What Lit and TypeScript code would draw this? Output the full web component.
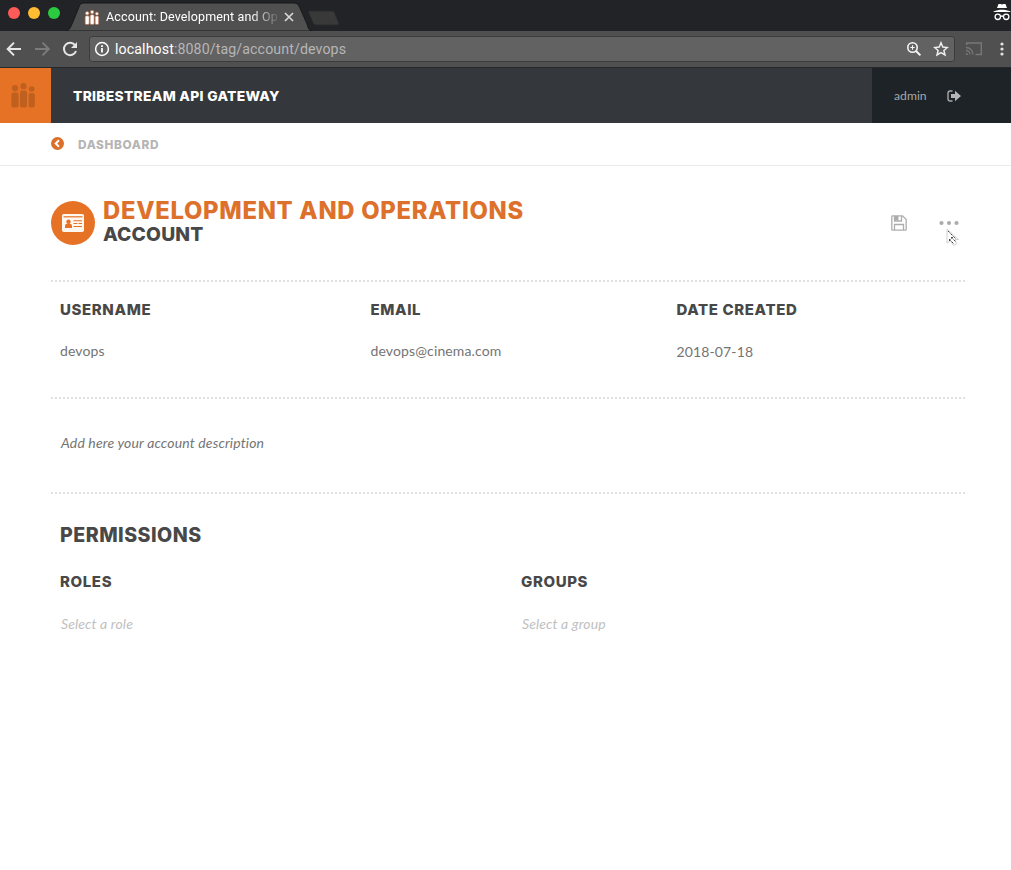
import { LitElement, html, css, svg } from "lit";
import { customElement } from "lit/decorators.js";

const people = svg`
  <circle cx="4" cy="5.2" r="3.1"/><circle cx="12.5" cy="3.2" r="3.1"/><circle cx="20.7" cy="6" r="2.8"/>
  <rect x="0.4" y="9.5" width="7.2" height="15" rx="2.2"/>
  <rect x="9" y="7.6" width="7" height="16.9" rx="2.2"/>
  <rect x="17.6" y="10" width="6.2" height="14.5" rx="2.2"/>`;

@customElement("browser-chrome")
class BrowserChrome extends LitElement {
  static styles = css`
    :host { display: block; font-family: Roboto, "Liberation Sans", sans-serif; }
    .tabs { height: 31px; background: #212326; display: flex; position: relative; box-sizing: border-box; }
    .lights { display: flex; gap: 8px; padding: 7px 0 0 8px; width: 60px; }
    .light { width: 12px; height: 12px; border-radius: 50%; }
    .red { background: #fc5b57; }
    .yellow { background: #fdbc31; }
    .green { background: #2bca41; }
    .shape { position: absolute; left: 66px; top: 0; }
    .tab { position: relative; display: flex; align-items: center; height: 28px; margin-top: 3px; padding-left: 16px; }
    .favicon { margin-right: 6px; }
    .title { width: 173px; font-size: 12.5px; letter-spacing: 0.14px; line-height: 16px; padding-bottom: 1px; white-space: nowrap; color: #fff;
      -webkit-mask-image: linear-gradient(90deg, #000 145px, transparent 175px); }
    .close { margin-left: 5px; }
    .spy { position: absolute; right: 0; top: 3px; }
    .toolbar { height: 37px; box-sizing: border-box; background: #505050; border-bottom: 1px solid #26292b; display: flex; align-items: center; padding: 0 5px; }
    .nav { width: 84px; height: 20px; flex: none; }
    .omnibox { flex: none; width: 866px; height: 26px; box-sizing: border-box; background: #626262; border: 1px solid #3c3c3c; border-radius: 3px; display: flex; align-items: center; padding: 0 5px 0 4px; }
    .url { flex: 1; margin-left: 5px; font-size: 14.2px; letter-spacing: 0.1px; color: #b6b6b6; white-space: nowrap; }
    .host { color: #fff; }
    .star { margin-left: 11px; }
    .cast { margin-left: 10px; }
    .menu { margin-left: 15px; }
    svg { display: block; flex: none; }
  `;
  render() {
    return html`
      <div class="tabs">
        <svg class="shape" width="280" height="31" viewBox="0 0 280 31">
          <path d="M0 31C4 30 4.500 27 6 24L13 7C14 4 15 3 18 3H228C231 3 232 4 233.500 7L241 24C242 28 243 30.500 246 31Z" fill="#505050" stroke="#17181a" stroke-width="1"/>
          <path d="M243 11H266C267.500 11 268 11.500 268.500 12.500L273 24C273 25 272.500 25 271.500 25H250C248 25 247.500 24 247 23L242.500 12.500Z" fill="#393939" stroke="#292a2b" stroke-width="1"/>
        </svg>
        <div class="lights"><i class="light red"></i><i class="light yellow"></i><i class="light green"></i></div>
        <div class="tab">
          <svg class="favicon" width="16" height="17" viewBox="-1.500 -1 27.500 27" fill="#fff" stroke="#b6653f" stroke-width="1.200">${people}</svg>
          <div class="title">Account: Development and Op</div>
          <svg class="close" width="10" height="10" viewBox="0 0 10 10"><path d="M1 1l8 8M9 1L1 9" stroke="#d8d8d8" stroke-width="1.700"/></svg>
        </div>
        <svg class="spy" width="18" height="19" viewBox="0 0 18 19">
          <path d="M5.500 1H7.500L9 1.500L10.500 1H12.500L14 5H4Z" fill="#fff"/>
          <path d="M0.500 8.500C6 6.200 12 6.200 17.500 8.500V9H.5Z" fill="#fff"/>
          <g fill="none" stroke="#fff" stroke-width="1.300"><circle cx="4.800" cy="13.800" r="2.700"/><circle cx="13.200" cy="13.800" r="2.700"/><path d="M7.500 13.500Q9 12.500 10.500 13.500"/></g>
        </svg>
      </div>
      <div class="toolbar">
        <svg class="nav" viewBox="0 0 84 20" fill="none" stroke-width="2">
          <path d="M16 10H3.500M9 3.600L2.700 10L9 16.400" stroke="#e6e6e6"/>
          <path d="M30 10H43M37.500 3.600L43.800 10L37.500 16.400" stroke="#7b7b7b"/>
          <path d="M70.300 6.500A6.200 6.200 0 1 0 71 12" stroke="#e6e6e6"/>
          <path d="M72 3V9H66Z" fill="#e6e6e6"/>
        </svg>
        <div class="omnibox">
          <svg width="16" height="16" viewBox="0 0 16 16"><circle cx="8" cy="8" r="6.400" fill="none" stroke="#fff" stroke-width="1.500"/><path d="M7.100 7H8.900V11.500H7.100ZM7.100 4.300H8.900V6H7.100Z" fill="#fff"/></svg>
          <div class="url"><span class="host">localhost</span>:8080/tag/account/devops</div>
          <svg width="16" height="16" viewBox="0 0 16 16" fill="none" stroke="#f5f5f5"><circle cx="6.500" cy="6.500" r="4.700" stroke-width="1.600"/><path d="M10 10L14.400 14.400" stroke-width="2"/><path d="M4.300 6.500H8.700M6.500 4.300V8.700" stroke-width="1.100"/></svg>
          <svg class="star" width="16" height="16" viewBox="0 0 16 16"><path d="M8 1.800L9.800 6.100L14.400 6.500L10.900 9.500L12 14L8 11.600L4 14L5.100 9.500L1.600 6.500L6.200 6.100Z" fill="none" stroke="#eee" stroke-width="1.500"/></svg>
        </div>
        <svg class="cast" width="18" height="16" viewBox="0 0 18 16" fill="none" stroke="#77767a" stroke-width="1.400"><path d="M1.700 4V2H16.300V13.500H10.500M1 6.500A7 7 0 0 1 8 13.500M1 9.500A4 4 0 0 1 5 13.500"/><path d="M1 12V14H3A2 2 0 0 0 1 12Z" fill="#77767a" stroke="none"/></svg>
        <svg class="menu" width="8" height="16" viewBox="0 0 8 16" fill="#e4e4e4"><circle cx="4" cy="3" r="1.600"/><circle cx="4" cy="8" r="1.600"/><circle cx="4" cy="13" r="1.600"/></svg>
      </div>`;
  }
}

@customElement("app-root")
class AppRoot extends LitElement {
  static styles = css`
    :host { display: block; height: 870px; overflow: hidden; background: #fff; color: #747474; font-family: Lato, sans-serif; font-size: 14px; position: relative; }
    svg { display: block; flex: none; }
    .display { font-family: Inter, "Open Sans", sans-serif; font-weight: 800; margin: 0; white-space: nowrap; color: #484848; }
    .header { display: flex; height: 55px; background: #34373b; }
    .logo { width: 51px; background: #e67225; display: flex; justify-content: center; align-items: center; padding-right: 5px; box-sizing: border-box; }
    .brand { flex: 1; color: #fff; font-size: 13.800px; line-height: 56px; padding-left: 22px; letter-spacing: 0.310px; }
    .user { width: 139px; box-sizing: border-box; background: #1e2327; color: #a5a8aa; display: flex; align-items: center; padding-left: 22px; font-size: 12.200px; }
    .name { width: 53px; letter-spacing: 0; }
    .crumb { height: 42px; border-bottom: 1px solid #ebebeb; display: flex; align-items: center; padding-left: 51px; gap: 14px; }
    .crumb-icon { margin-bottom: 1px; }
    .crumb-label { font-size: 11.800px; letter-spacing: 0.650px; color: #b5b5b5; line-height: 14px; padding-top: 2px; }
    .page { margin: 0 46px 0 51px; }
    .heading { height: 114px; display: flex; box-sizing: border-box; padding-top: 31px; }
    .avatar { width: 44px; height: 44px; border-radius: 50%; background: #e67225; display: flex; align-items: center; justify-content: center; margin: 4px 8px 0 0; }
    .titles { flex: 1; padding-top: 1px; }
    .title { font-size: 23.800px; line-height: 25px; color: #dd712c; letter-spacing: 0.720px; }
    .subtitle { font-size: 19.300px; line-height: 22px; letter-spacing: 0.150px; }
    .actions { display: flex; align-items: center; height: 44px; margin-top: 4px; gap: 32px; padding-right: 6px; }
    .rule { height: 2px; background: repeating-linear-gradient(90deg, #e0e0e0 0 2px, transparent 2px 4px); }
    .fields { height: 115px; display: grid; grid-template-columns: 310.500px 306px 1fr; padding-left: 9px; box-sizing: border-box; }
    .label { font-size: 15px; line-height: 20px; letter-spacing: 0.620px; }
    .fields .label { padding-top: 18px; }
    .value { margin-top: 21px; line-height: 20px; letter-spacing: 0.130px; }
    .date { margin-top: 22px; }
    .description { height: 93px; line-height: 88px; padding-left: 10px; font-style: italic; letter-spacing: 0.150px; }
    .permissions { padding-left: 9px; }
    .section { font-size: 19.600px; line-height: 24px; padding-top: 29px; letter-spacing: 0.480px; }
    .columns { display: grid; grid-template-columns: 461px 1fr; padding-top: 25px; }
    .placeholder { font-style: italic; color: #c0c0c0; line-height: 20px; margin-top: 22px; padding-left: 1px; letter-spacing: 0.130px; }
    .cursor { position: absolute; left: 944px; top: 227px; }
  `;
  render() {
    return html`
      <browser-chrome></browser-chrome>
      <header class="header">
        <div class="logo"><svg width="24" height="25" viewBox="0 0 24 25" fill="#c0601f">${people}</svg></div>
        <h1 class="display brand">TRIBESTREAM API GATEWAY</h1>
        <div class="user"><span class="name">admin</span>
          <svg width="14" height="12" viewBox="0 0 14 12"><path d="M5.500 1H3.200Q1 1 1 3.200V8.800Q1 11 3.200 11H5.500" fill="none" stroke="#a5a8aa" stroke-width="1.400"/><path d="M4 4H8V0.800L14 6L8 11.200V8H4Z" fill="#b4b5b6"/></svg>
        </div>
      </header>
      <nav class="crumb">
        <svg class="crumb-icon" width="13" height="13" viewBox="0 0 13 13"><circle cx="6.500" cy="6.500" r="6.500" fill="#dd6f2b"/><path d="M8 3.200L4.700 6.500L8 9.800" fill="none" stroke="#fff" stroke-width="2"/></svg>
        <span class="display crumb-label">DASHBOARD</span>
      </nav>
      <main class="page">
        <div class="heading">
          <div class="avatar"><svg width="22" height="18" viewBox="0 0 22 18"><rect width="22" height="18" rx="1.800" fill="#fff8f0"/><path d="M1.500 2.800H20.500" stroke="#e67225" stroke-width="1.200"/><g fill="#e67225"><circle cx="6.500" cy="7.700" r="2.200"/><path d="M3 14V12Q3 9.700 5 9.700H8Q10 9.700 10 12V14Z"/><path d="M11.500 6.200H20V7.300H11.500ZM11.500 9H15.500V10.100H11.500ZM16.500 9H20V10.100H16.500ZM11.500 12H20V13.100H11.500Z"/></g></svg></div>
          <div class="titles"><h2 class="display title">DEVELOPMENT AND OPERATIONS</h2><h3 class="display subtitle">ACCOUNT</h3></div>
          <div class="actions">
            <svg width="16" height="16" viewBox="0 0 16 16" fill="none" stroke="#adadad" stroke-width="1.300"><path d="M.8 1.500Q.8.8 1.500.8H11.500L15.200 4.500V14.500Q15.200 15.200 14.500 15.200H1.500Q.8 15.200.8 14.500ZM3.500 1V6H10.500V1M3.500 15V9.500H12.500V15"/><path d="M4 1H7.500V5.500H4Z" fill="#adadad" stroke="none"/></svg>
            <svg width="20" height="6" viewBox="0 0 20 6" fill="#ababab"><circle cx="2.500" cy="3" r="2.100"/><circle cx="10" cy="3" r="2.100"/><circle cx="17.500" cy="3" r="2.100"/></svg>
          </div>
        </div>
        <div class="rule"></div>
        <section class="fields">
          <div><h4 class="display label">USERNAME</h4><div class="value">devops</div></div>
          <div><h4 class="display label">EMAIL</h4><div class="value">devops@cinema.com</div></div>
          <div><h4 class="display label">DATE CREATED</h4><div class="value date">2018-07-18</div></div>
        </section>
        <div class="rule"></div>
        <div class="description">Add here your account description</div>
        <div class="rule"></div>
        <section class="permissions">
          <h3 class="display section">PERMISSIONS</h3>
          <div class="columns">
            <div><h4 class="display label">ROLES</h4><div class="placeholder">Select a role</div></div>
            <div><h4 class="display label">GROUPS</h4><div class="placeholder">Select a group</div></div>
          </div>
        </section>
      </main>
      <svg class="cursor" width="16" height="20" viewBox="0 0 16 20">
        <path d="M3 2V16L6.300 13.500L9.500 18.500L12.500 17L11 12.500H14.500Z" fill="#fff" stroke="#d0d0d0"/>
        <path d="M4 4L12 12M5 12L10 17M7 10L12 15M5 14L9 10" stroke="#333" stroke-width="1" stroke-dasharray="1.300 .9"/>
      </svg>`;
  }
}
